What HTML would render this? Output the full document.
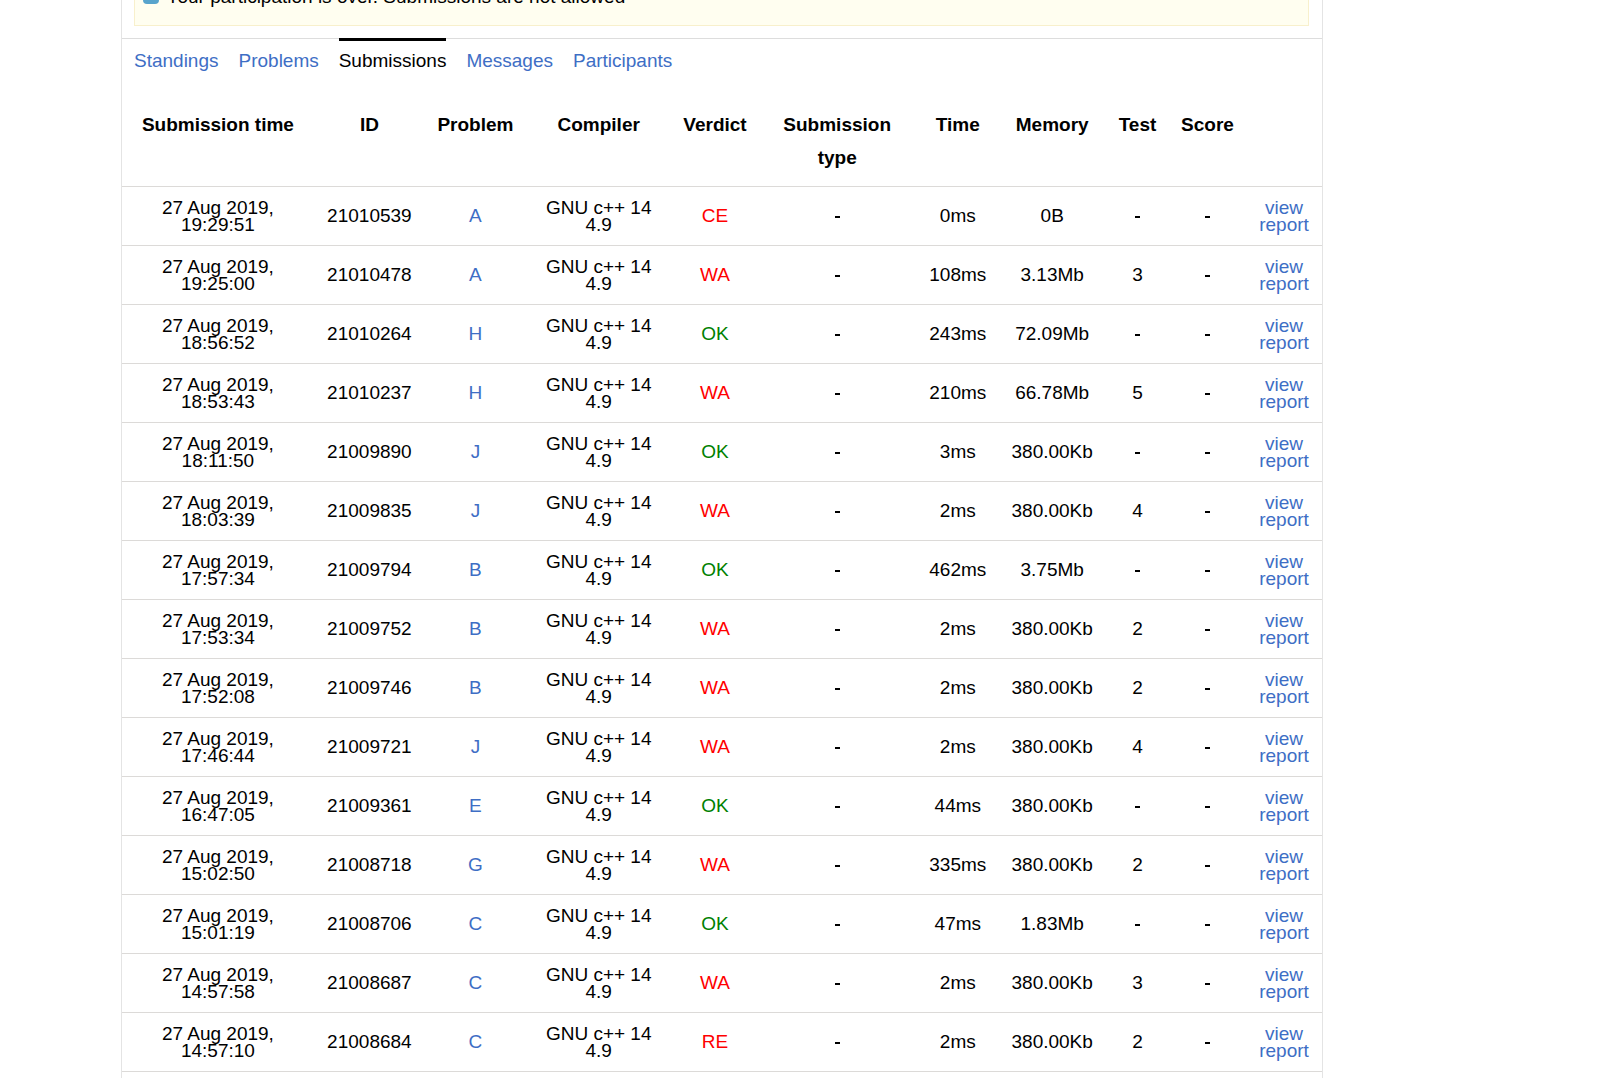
<!DOCTYPE html>
<html><head><meta charset="utf-8">
<style>
html,body{margin:0;padding:0;background:#fff;}
body{width:1608px;height:1078px;overflow:hidden;position:relative;font-family:"Liberation Sans",sans-serif;font-size:19px;color:#000;}
.panel{position:absolute;left:121px;top:-200px;width:1200px;height:1400px;border-left:1px solid #e4e4e4;border-right:1px solid #e4e4e4;}
.alert{position:absolute;left:134px;top:-40px;width:1173px;height:64px;background:#fffef0;border:1px solid #f8f0cc;}
.icon{position:absolute;left:143px;top:-12px;width:16px;height:16px;border-radius:4px;background:#58a4cc;}
.alerttext{position:absolute;left:166.5px;top:-14px;line-height:22px;white-space:nowrap;}
.tabline{position:absolute;left:122px;top:38px;width:1200px;height:1px;background:#ddd;}
.tab{position:absolute;top:50px;line-height:22px;white-space:nowrap;color:#3e6ec5;}
.tab.act{color:#000;}
.bar{position:absolute;left:339px;top:38px;width:107px;height:3px;background:#000;}
.th{position:absolute;top:0;line-height:33px;font-weight:bold;text-align:center;width:180px;white-space:nowrap;}
.hdr{position:absolute;left:122px;top:0;width:1200px;height:186px;border-bottom:1px solid #dcdad8;}
.row{position:absolute;left:0;width:1608px;height:58px;}
.rb{position:absolute;left:122px;width:1200px;height:1px;background:#dcdad8;}
.c{position:absolute;top:0;width:180px;text-align:center;line-height:17px;white-space:nowrap;}
.dash{position:absolute;top:29px;width:5px;height:2px;background:#000;}
.lk{color:#3e6ec5;}
.red{color:#f00;}
.grn{color:#008000;}
</style></head><body>
<div class="panel"></div>
<div class="alert"></div>
<div class="icon"></div>
<div class="alerttext">Your participation is over. Submissions are not allowed</div>
<div class="tabline"></div>
<div class="bar"></div>
<div class="tab" style="left:134px">Standings</div>
<div class="tab" style="left:238.5px">Problems</div>
<div class="tab act" style="left:338.7px">Submissions</div>
<div class="tab" style="left:466.4px">Messages</div>
<div class="tab" style="left:573px">Participants</div>

<div class="th" style="left:127.9px;top:107.6px">Submission time</div>
<div class="th" style="left:279.4px;top:107.6px">ID</div>
<div class="th" style="left:385.4px;top:107.6px">Problem</div>
<div class="th" style="left:508.7px;top:107.6px">Compiler</div>
<div class="th" style="left:625.0px;top:107.6px">Verdict</div>
<div class="th" style="left:747.2px;top:107.6px">Submission<br>type</div>
<div class="th" style="left:867.8px;top:107.6px">Time</div>
<div class="th" style="left:962.2px;top:107.6px">Memory</div>
<div class="th" style="left:1047.5px;top:107.6px">Test</div>
<div class="th" style="left:1117.5px;top:107.6px">Score</div>
<div class="rb" style="top:186px"></div>
<div class="row" style="top:187px">
<div class="c " style="left:127.9px;top:12px">27 Aug 2019,<br>19:29:51</div>
<div class="c " style="left:279.4px;top:20px">21010539</div>
<div class="c lk" style="left:385.4px;top:20px">A</div>
<div class="c " style="left:508.7px;top:12px">GNU c++ 14<br>4.9</div>
<div class="c red" style="left:625.0px;top:20px">CE</div>
<div class="dash" style="left:835px"></div>
<div class="c " style="left:867.8px;top:20px">0ms</div>
<div class="c " style="left:962.2px;top:20px">0B</div>
<div class="dash" style="left:1135px"></div>
<div class="dash" style="left:1205px"></div>
<div class="c lk" style="left:1194.0px;top:12px">view<br>report</div>
</div>
<div class="rb" style="top:245px"></div>
<div class="row" style="top:246px">
<div class="c " style="left:127.9px;top:12px">27 Aug 2019,<br>19:25:00</div>
<div class="c " style="left:279.4px;top:20px">21010478</div>
<div class="c lk" style="left:385.4px;top:20px">A</div>
<div class="c " style="left:508.7px;top:12px">GNU c++ 14<br>4.9</div>
<div class="c red" style="left:625.0px;top:20px">WA</div>
<div class="dash" style="left:835px"></div>
<div class="c " style="left:867.8px;top:20px">108ms</div>
<div class="c " style="left:962.2px;top:20px">3.13Mb</div>
<div class="c " style="left:1047.5px;top:20px">3</div>
<div class="dash" style="left:1205px"></div>
<div class="c lk" style="left:1194.0px;top:12px">view<br>report</div>
</div>
<div class="rb" style="top:304px"></div>
<div class="row" style="top:305px">
<div class="c " style="left:127.9px;top:12px">27 Aug 2019,<br>18:56:52</div>
<div class="c " style="left:279.4px;top:20px">21010264</div>
<div class="c lk" style="left:385.4px;top:20px">H</div>
<div class="c " style="left:508.7px;top:12px">GNU c++ 14<br>4.9</div>
<div class="c grn" style="left:625.0px;top:20px">OK</div>
<div class="dash" style="left:835px"></div>
<div class="c " style="left:867.8px;top:20px">243ms</div>
<div class="c " style="left:962.2px;top:20px">72.09Mb</div>
<div class="dash" style="left:1135px"></div>
<div class="dash" style="left:1205px"></div>
<div class="c lk" style="left:1194.0px;top:12px">view<br>report</div>
</div>
<div class="rb" style="top:363px"></div>
<div class="row" style="top:364px">
<div class="c " style="left:127.9px;top:12px">27 Aug 2019,<br>18:53:43</div>
<div class="c " style="left:279.4px;top:20px">21010237</div>
<div class="c lk" style="left:385.4px;top:20px">H</div>
<div class="c " style="left:508.7px;top:12px">GNU c++ 14<br>4.9</div>
<div class="c red" style="left:625.0px;top:20px">WA</div>
<div class="dash" style="left:835px"></div>
<div class="c " style="left:867.8px;top:20px">210ms</div>
<div class="c " style="left:962.2px;top:20px">66.78Mb</div>
<div class="c " style="left:1047.5px;top:20px">5</div>
<div class="dash" style="left:1205px"></div>
<div class="c lk" style="left:1194.0px;top:12px">view<br>report</div>
</div>
<div class="rb" style="top:422px"></div>
<div class="row" style="top:423px">
<div class="c " style="left:127.9px;top:12px">27 Aug 2019,<br>18:11:50</div>
<div class="c " style="left:279.4px;top:20px">21009890</div>
<div class="c lk" style="left:385.4px;top:20px">J</div>
<div class="c " style="left:508.7px;top:12px">GNU c++ 14<br>4.9</div>
<div class="c grn" style="left:625.0px;top:20px">OK</div>
<div class="dash" style="left:835px"></div>
<div class="c " style="left:867.8px;top:20px">3ms</div>
<div class="c " style="left:962.2px;top:20px">380.00Kb</div>
<div class="dash" style="left:1135px"></div>
<div class="dash" style="left:1205px"></div>
<div class="c lk" style="left:1194.0px;top:12px">view<br>report</div>
</div>
<div class="rb" style="top:481px"></div>
<div class="row" style="top:482px">
<div class="c " style="left:127.9px;top:12px">27 Aug 2019,<br>18:03:39</div>
<div class="c " style="left:279.4px;top:20px">21009835</div>
<div class="c lk" style="left:385.4px;top:20px">J</div>
<div class="c " style="left:508.7px;top:12px">GNU c++ 14<br>4.9</div>
<div class="c red" style="left:625.0px;top:20px">WA</div>
<div class="dash" style="left:835px"></div>
<div class="c " style="left:867.8px;top:20px">2ms</div>
<div class="c " style="left:962.2px;top:20px">380.00Kb</div>
<div class="c " style="left:1047.5px;top:20px">4</div>
<div class="dash" style="left:1205px"></div>
<div class="c lk" style="left:1194.0px;top:12px">view<br>report</div>
</div>
<div class="rb" style="top:540px"></div>
<div class="row" style="top:541px">
<div class="c " style="left:127.9px;top:12px">27 Aug 2019,<br>17:57:34</div>
<div class="c " style="left:279.4px;top:20px">21009794</div>
<div class="c lk" style="left:385.4px;top:20px">B</div>
<div class="c " style="left:508.7px;top:12px">GNU c++ 14<br>4.9</div>
<div class="c grn" style="left:625.0px;top:20px">OK</div>
<div class="dash" style="left:835px"></div>
<div class="c " style="left:867.8px;top:20px">462ms</div>
<div class="c " style="left:962.2px;top:20px">3.75Mb</div>
<div class="dash" style="left:1135px"></div>
<div class="dash" style="left:1205px"></div>
<div class="c lk" style="left:1194.0px;top:12px">view<br>report</div>
</div>
<div class="rb" style="top:599px"></div>
<div class="row" style="top:600px">
<div class="c " style="left:127.9px;top:12px">27 Aug 2019,<br>17:53:34</div>
<div class="c " style="left:279.4px;top:20px">21009752</div>
<div class="c lk" style="left:385.4px;top:20px">B</div>
<div class="c " style="left:508.7px;top:12px">GNU c++ 14<br>4.9</div>
<div class="c red" style="left:625.0px;top:20px">WA</div>
<div class="dash" style="left:835px"></div>
<div class="c " style="left:867.8px;top:20px">2ms</div>
<div class="c " style="left:962.2px;top:20px">380.00Kb</div>
<div class="c " style="left:1047.5px;top:20px">2</div>
<div class="dash" style="left:1205px"></div>
<div class="c lk" style="left:1194.0px;top:12px">view<br>report</div>
</div>
<div class="rb" style="top:658px"></div>
<div class="row" style="top:659px">
<div class="c " style="left:127.9px;top:12px">27 Aug 2019,<br>17:52:08</div>
<div class="c " style="left:279.4px;top:20px">21009746</div>
<div class="c lk" style="left:385.4px;top:20px">B</div>
<div class="c " style="left:508.7px;top:12px">GNU c++ 14<br>4.9</div>
<div class="c red" style="left:625.0px;top:20px">WA</div>
<div class="dash" style="left:835px"></div>
<div class="c " style="left:867.8px;top:20px">2ms</div>
<div class="c " style="left:962.2px;top:20px">380.00Kb</div>
<div class="c " style="left:1047.5px;top:20px">2</div>
<div class="dash" style="left:1205px"></div>
<div class="c lk" style="left:1194.0px;top:12px">view<br>report</div>
</div>
<div class="rb" style="top:717px"></div>
<div class="row" style="top:718px">
<div class="c " style="left:127.9px;top:12px">27 Aug 2019,<br>17:46:44</div>
<div class="c " style="left:279.4px;top:20px">21009721</div>
<div class="c lk" style="left:385.4px;top:20px">J</div>
<div class="c " style="left:508.7px;top:12px">GNU c++ 14<br>4.9</div>
<div class="c red" style="left:625.0px;top:20px">WA</div>
<div class="dash" style="left:835px"></div>
<div class="c " style="left:867.8px;top:20px">2ms</div>
<div class="c " style="left:962.2px;top:20px">380.00Kb</div>
<div class="c " style="left:1047.5px;top:20px">4</div>
<div class="dash" style="left:1205px"></div>
<div class="c lk" style="left:1194.0px;top:12px">view<br>report</div>
</div>
<div class="rb" style="top:776px"></div>
<div class="row" style="top:777px">
<div class="c " style="left:127.9px;top:12px">27 Aug 2019,<br>16:47:05</div>
<div class="c " style="left:279.4px;top:20px">21009361</div>
<div class="c lk" style="left:385.4px;top:20px">E</div>
<div class="c " style="left:508.7px;top:12px">GNU c++ 14<br>4.9</div>
<div class="c grn" style="left:625.0px;top:20px">OK</div>
<div class="dash" style="left:835px"></div>
<div class="c " style="left:867.8px;top:20px">44ms</div>
<div class="c " style="left:962.2px;top:20px">380.00Kb</div>
<div class="dash" style="left:1135px"></div>
<div class="dash" style="left:1205px"></div>
<div class="c lk" style="left:1194.0px;top:12px">view<br>report</div>
</div>
<div class="rb" style="top:835px"></div>
<div class="row" style="top:836px">
<div class="c " style="left:127.9px;top:12px">27 Aug 2019,<br>15:02:50</div>
<div class="c " style="left:279.4px;top:20px">21008718</div>
<div class="c lk" style="left:385.4px;top:20px">G</div>
<div class="c " style="left:508.7px;top:12px">GNU c++ 14<br>4.9</div>
<div class="c red" style="left:625.0px;top:20px">WA</div>
<div class="dash" style="left:835px"></div>
<div class="c " style="left:867.8px;top:20px">335ms</div>
<div class="c " style="left:962.2px;top:20px">380.00Kb</div>
<div class="c " style="left:1047.5px;top:20px">2</div>
<div class="dash" style="left:1205px"></div>
<div class="c lk" style="left:1194.0px;top:12px">view<br>report</div>
</div>
<div class="rb" style="top:894px"></div>
<div class="row" style="top:895px">
<div class="c " style="left:127.9px;top:12px">27 Aug 2019,<br>15:01:19</div>
<div class="c " style="left:279.4px;top:20px">21008706</div>
<div class="c lk" style="left:385.4px;top:20px">C</div>
<div class="c " style="left:508.7px;top:12px">GNU c++ 14<br>4.9</div>
<div class="c grn" style="left:625.0px;top:20px">OK</div>
<div class="dash" style="left:835px"></div>
<div class="c " style="left:867.8px;top:20px">47ms</div>
<div class="c " style="left:962.2px;top:20px">1.83Mb</div>
<div class="dash" style="left:1135px"></div>
<div class="dash" style="left:1205px"></div>
<div class="c lk" style="left:1194.0px;top:12px">view<br>report</div>
</div>
<div class="rb" style="top:953px"></div>
<div class="row" style="top:954px">
<div class="c " style="left:127.9px;top:12px">27 Aug 2019,<br>14:57:58</div>
<div class="c " style="left:279.4px;top:20px">21008687</div>
<div class="c lk" style="left:385.4px;top:20px">C</div>
<div class="c " style="left:508.7px;top:12px">GNU c++ 14<br>4.9</div>
<div class="c red" style="left:625.0px;top:20px">WA</div>
<div class="dash" style="left:835px"></div>
<div class="c " style="left:867.8px;top:20px">2ms</div>
<div class="c " style="left:962.2px;top:20px">380.00Kb</div>
<div class="c " style="left:1047.5px;top:20px">3</div>
<div class="dash" style="left:1205px"></div>
<div class="c lk" style="left:1194.0px;top:12px">view<br>report</div>
</div>
<div class="rb" style="top:1012px"></div>
<div class="row" style="top:1013px">
<div class="c " style="left:127.9px;top:12px">27 Aug 2019,<br>14:57:10</div>
<div class="c " style="left:279.4px;top:20px">21008684</div>
<div class="c lk" style="left:385.4px;top:20px">C</div>
<div class="c " style="left:508.7px;top:12px">GNU c++ 14<br>4.9</div>
<div class="c red" style="left:625.0px;top:20px">RE</div>
<div class="dash" style="left:835px"></div>
<div class="c " style="left:867.8px;top:20px">2ms</div>
<div class="c " style="left:962.2px;top:20px">380.00Kb</div>
<div class="c " style="left:1047.5px;top:20px">2</div>
<div class="dash" style="left:1205px"></div>
<div class="c lk" style="left:1194.0px;top:12px">view<br>report</div>
</div>
<div class="rb" style="top:1071px"></div>
</body></html>
